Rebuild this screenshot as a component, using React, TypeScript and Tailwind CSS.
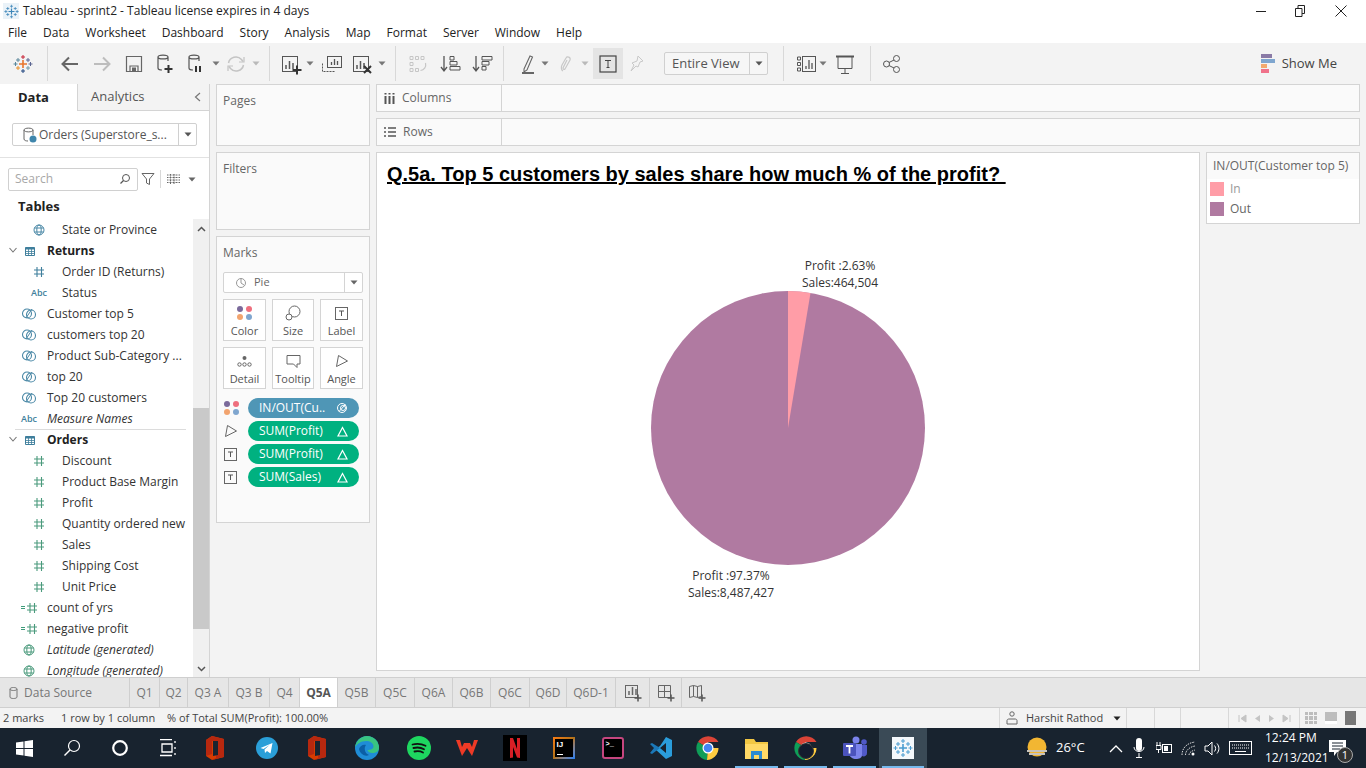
import { ReactNode } from "react";

const ink = "#555";

function Svg({ children, w = 24, h = 24, className = "" }: { children: ReactNode; w?: number; h?: number; className?: string }) {
  return (
    <svg width={w} height={h} viewBox={`0 0 ${w} ${h}`} fill="none" className={`shrink-0 ${className}`}>
      {children}
    </svg>
  );
}

function Plus({ x, y, s, color, t = 1.5 }: { x: number; y: number; s: number; color: string; t?: number }) {
  return <path d={`M${x - s} ${y}H${x + s}M${x} ${y - s}V${y + s}`} stroke={color} strokeWidth={t} />;
}

function TableauLogo({ size = 20, mono }: { size?: number; mono?: string }) {
  const c = (v: string) => mono ?? v;
  return (
    <svg width={size} height={size} viewBox="0 0 20 20" className="shrink-0">
      <Plus x={10} y={10} s={4} color={c("#e8762c")} t={1.6} />
      <Plus x={5} y={6} s={2} color={c("#5b879b")} t={1} />
      <Plus x={15} y={6} s={2} color={c("#5b6591")} t={1} />
      <Plus x={5} y={14} s={2} color={c("#eb912b")} t={1} />
      <Plus x={15} y={14} s={2} color={c("#7099a6")} t={1} />
      <Plus x={10} y={3} s={2} color={c("#c72035")} t={1} />
      <Plus x={10} y={17} s={2} color={c("#1f457e")} t={1} />
      <Plus x={2.5} y={10} s={2} color={c("#59879b")} t={1} />
      <Plus x={17.5} y={10} s={2} color={c("#5b6591")} t={1} />
    </svg>
  );
}

function Caret({ className = "", color = "#777" }: { className?: string; color?: string }) {
  return (
    <svg width="8" height="5" viewBox="0 0 8 5" className={`shrink-0 ${className}`}>
      <path d="M0.5 0.5H7.5L4 4.5Z" fill={color} />
    </svg>
  );
}

function Sep({ className = "" }: { className?: string }) {
  return <div className={`w-px h-[35px] bg-[#d8d8d8] shrink-0 ${className}`} />;
}

function Cyl({ x = 5, y = 3, color = ink }: { x?: number; y?: number; color?: string }) {
  return (
    <path
      d={`M${x} ${y + 2}c0-2.600 10-2.600 10 0v4M${x} ${y + 2}c0 2.600 10 2.600 10 0M${x} ${y + 2}v11c0 1.500 2 2 4 2`}
      stroke={color}
      strokeWidth="1.200"
    />
  );
}

function BarsBox({ x = 4, y = 4, s = 14, color = ink }: { x?: number; y?: number; s?: number; color?: string }) {
  return (
    <>
      <rect x={x + 0.5} y={y + 0.5} width={s} height={s} stroke={color} />
      <path d={`M${x + 4} ${y + s - 2}v-4M${x + 7.500} ${y + s - 2}v-8M${x + 11} ${y + s - 2}v-6`} stroke={color} strokeWidth="1.500" />
    </>
  );
}

function Toolbar() {
  return (
    <div className="h-[41px] bg-[#f3f3f3] flex items-center shrink-0">
      <div className="ml-[13px] w-[20px] flex justify-center"><TableauLogo /></div>
      <Sep className="ml-[14px]" />
      <Svg className="ml-[10px]">
        <path d="M20 12H5M11 5.500 4.500 12l6.500 6.500" stroke="#666" strokeWidth="2" />
      </Svg>
      <Svg className="ml-[8px]">
        <path d="M4 12h15M13 5.500l6.500 6.500-6.500 6.500" stroke="#bdbdbd" strokeWidth="2" />
      </Svg>
      <Svg className="ml-[8px]">
        <path d="M4.500 4.500h15v15h-15zM8 19v-5h8v5" stroke="#666" strokeWidth="1.200" />
        <rect x="10" y="15.500" width="4" height="3.500" fill="#666" />
      </Svg>
      <Svg className="ml-[7px]">
        <Cyl x={5} y={3} />
        <Plus x={15.500} y={17} s={4} color="#333" t={2} />
      </Svg>
      <Svg className="ml-[7px]">
        <Cyl x={5} y={3} />
        <path d="M12 14v6M16 14v6" stroke="#333" strokeWidth="2" />
      </Svg>
      <Caret className="ml-[4px]" />
      <Svg className="ml-[4px]">
        <path d="M4.500 11a7.500 7.500 0 0 1 13-3.500l1.500 2M19.500 13a7.500 7.500 0 0 1-13 3.500L5 14.500" stroke="#c4c4c4" strokeWidth="1.500" />
        <path d="M20 5v5h-5M4 19v-5h5" stroke="#c4c4c4" strokeWidth="1.200" />
      </Svg>
      <Caret className="ml-[4px]" color="#b9b9b9" />
      <Sep className="ml-[9px]" />
      <Svg className="ml-[9px]">
        <BarsBox x={3} y={4} s={15} />
        <Plus x={18} y={18} s={4.500} color="#333" t={2} />
      </Svg>
      <Caret className="ml-[3px]" />
      <Svg className="ml-[6px]">
        <path d="M2.500 11.500v8h13" stroke={ink} strokeDasharray="2 1" />
        <rect x="7.500" y="4.500" width="14" height="11" stroke={ink} fill="#f3f3f3" />
        <path d="M11.500 13v-3M14.500 13V7M17.500 13V9" stroke={ink} strokeWidth="1.300" />
      </Svg>
      <Svg className="ml-[6px]">
        <BarsBox x={3} y={4} s={15} />
        <path d="M14 14l7 7M21 14l-7 7" stroke="#333" strokeWidth="2" />
      </Svg>
      <Caret className="ml-[4px]" />
      <Sep className="ml-[9px]" />
      <Svg className="ml-[9px]">
        <path d="M5 4.500h3v3H5zM10.500 4.500h3v3h-3zM16 4.500h3v3h-3zM5 10.500h3v3H5zM5 16.500h3v3H5zM10.500 16.500h3v3h-3z" stroke="#c6c6c6" />
        <path d="M20.500 11c1 4-1.500 7-5 7.500" stroke="#c6c6c6" strokeWidth="1.200" />
      </Svg>
      <Svg className="ml-[9px]">
        <path d="M6 4v14M3 15l3 4 3-4" stroke={ink} strokeWidth="1.300" />
        <path d="M12 4.500h4v3.500h-4zM12 9.500h7v3.500h-7zM12 14.500h10v3.500H12z" stroke={ink} />
      </Svg>
      <Svg className="ml-[8px]">
        <path d="M6 4v14M3 15l3 4 3-4" stroke={ink} strokeWidth="1.300" />
        <path d="M12 4.500h10v3.500H12zM12 9.500h7v3.500h-7zM12 14.500h4v3.500h-4z" stroke={ink} />
      </Svg>
      <Sep className="ml-[9px]" />
      <Svg className="ml-[12px]">
        <path d="M8 17 14 4l2.500 1L11 18l-3 2z" stroke="#666" strokeWidth="1.100" />
        <rect x="6" y="20" width="12" height="2" fill="#666" />
      </Svg>
      <Caret className="ml-[1px]" />
      <Svg className="ml-[5px]">
        <path d="M9 19c-2-1-2-4-1-6l4-7c1-2 5-1 4 2l-5 9c-1 1-2 0-2-1l4-8" stroke="#c8c8c8" strokeWidth="1.200" />
      </Svg>
      <Caret className="ml-[3px]" color="#b9b9b9" />
      <div className="ml-[4px] w-[30px] h-[31px] bg-[#e4e4e4] flex items-center justify-center shrink-0">
        <Svg w={18} h={18}>
          <rect x="1" y="1" width="16" height="16" stroke="#444" strokeWidth="1.200" />
          <path d="M6 5.500h6M9 5.500v7M7.500 12.500h3" stroke="#444" />
        </Svg>
      </div>
      <Svg className="ml-[2px]">
        <path d="M13 4l5 5-3 1-2 5-2-1-5 5 3-6-2-2 5-2z" stroke="#c8c8c8" />
      </Svg>
      <div className="ml-[15px] w-[104px] h-[23px] border border-[#d0d0d0] rounded-[2px] bg-[#f6f6f6] flex items-center shrink-0">
        <span className="flex-1 pl-[7px] text-[#555] text-[13px]">Entire View</span>
        <div className="w-[18px] h-full border-l border-[#d0d0d0] flex items-center justify-center"><Caret color="#555" /></div>
      </div>
      <Sep className="ml-[15px]" />
      <Svg className="ml-[11px]">
        <path d="M2.500 5h3v3h-3zM2.500 10.500h3v3h-3zM2.500 16h3v3h-3z" stroke={ink} />
        <rect x="7.500" y="4.500" width="13" height="15" stroke={ink} />
        <path d="M11 17v-3M14 17V8M17 17v-6" stroke={ink} strokeWidth="1.300" />
      </Svg>
      <Caret className="" />
      <Svg className="ml-[6px]">
        <path d="M3 4.500h18" stroke={ink} strokeWidth="2" />
        <path d="M5 5v11.500h14V5M12 16.500V21M8 21.500h8" stroke={ink} />
      </Svg>
      <Sep className="ml-[13px]" />
      <Svg className="ml-[9px]">
        <circle cx="6.500" cy="12" r="3" stroke={ink} />
        <circle cx="16.500" cy="6.500" r="3" stroke={ink} />
        <circle cx="16.500" cy="17.500" r="3" stroke={ink} />
        <path d="M9 10.500l5-2.500M9 13.500l5 2.500" stroke={ink} />
      </Svg>
      <div className="ml-auto pr-[29px] flex items-center gap-[7px]">
        <div className="flex flex-col gap-0 w-[14px]">
          <div className="h-[4px] w-[11px] bg-[#8a7aa6]" />
          <div className="h-[4px] w-[14px] bg-[#7fa6cf] mt-px" />
          <div className="h-[4px] w-[6px] bg-[#f2a96f] mt-px" />
          <div className="h-[4px] w-[8px] bg-[#f0728a] mt-px" />
        </div>
        <span className="text-[13px] text-[#444]">Show Me</span>
      </div>
    </div>
  );
}

function GroupIcon() {
  return (
    <Svg w={16} h={14}>
      <circle cx="6" cy="6.500" r="4.500" stroke="#4a88a6" strokeWidth="1.100" />
      <circle cx="10" cy="7.500" r="4.500" stroke="#4a88a6" strokeWidth="1.100" />
      <path d="M5 11l6-9" stroke="#4a88a6" />
    </Svg>
  );
}
function Hash({ color = "#4a9a7c" }: { color?: string }) {
  return (
    <Svg w={12} h={12}>
      <path d="M4 1v10M8.500 1v10M1 4h10M1 8h10" stroke={color} strokeWidth="1.100" />
    </Svg>
  );
}
function CalcHash() {
  return (
    <div className="flex items-center gap-px">
      <span className="w-[4px] h-[3px] border-y border-[#3f9c7a]" />
      <Hash />
    </div>
  );
}
function Globe({ color = "#4a88a6" }: { color?: string }) {
  return (
    <Svg w={12} h={12}>
      <circle cx="6" cy="6" r="5" stroke={color} />
      <ellipse cx="6" cy="6" rx="2.200" ry="5" stroke={color} />
      <path d="M1.500 4h9M1.500 8h9" stroke={color} />
    </Svg>
  );
}
function Abc() {
  return <span className="text-[9px] font-semibold text-[#3f7f9c] leading-none">Abc</span>;
}
function TableIcon() {
  return (
    <Svg w={12} h={12}>
      <path d="M1.500 2.500h9v8h-9z" stroke="#3f7f9c" />
      <path d="M1.500 2.500h9v2h-9z" fill="#3f7f9c" />
      <path d="M1.500 6.500h9M1.500 8.500h9M4.500 4v6.500M7.500 4v6.500" stroke="#3f7f9c" strokeWidth="0.800" />
    </Svg>
  );
}
function Chevron() {
  return (
    <Svg w={10} h={7}>
      <path d="M1.500 1 5 5l3.500-4" stroke="#777" strokeWidth="1.100" />
    </Svg>
  );
}

// indent: child rows sit under a table, top level rows start further left
function Field({ icon, label, child, italic }: { icon: ReactNode; label: string; child?: boolean; italic?: boolean }) {
  return (
    <div className="h-[21px] flex items-center shrink-0">
      <div className={`flex justify-center shrink-0 ${child ? "w-[62px] pl-[26px] pr-[10px]" : "w-[47px] pl-[16px] pr-[5px]"}`}>{icon}</div>
      <span className={`whitespace-nowrap text-[12px] text-[#333] ${italic ? "italic" : ""}`}>{label}</span>
    </div>
  );
}
function TableRow({ label }: { label: string }) {
  return (
    <div className="h-[21px] flex items-center shrink-0">
      <div className="w-[24px] pl-[8px]"><Chevron /></div>
      <div className="w-[23px]"><TableIcon /></div>
      <span className="text-[12px] font-bold text-[#222]">{label}</span>
    </div>
  );
}

function DataPane() {
  return (
    <div className="w-[210px] bg-white border-r border-[#d4d4d4] flex flex-col shrink-0 overflow-hidden">
      <div className="h-[27px] flex shrink-0">
        <div className="w-[77px] pl-[18px] flex items-center font-bold text-[13px] text-[#222]">Data</div>
        <div className="flex-1 bg-[#f3f3f3] border-l border-b border-[#d4d4d4] flex items-center justify-between pl-[13px] pr-[6px] text-[13px] text-[#555]">
          <span>Analytics</span>
          <Svg w={10} h={12}><path d="M7 2 2.500 6 7 10" stroke="#777" strokeWidth="1.200" /></Svg>
        </div>
      </div>
      <div className="h-[47px] border-b border-[#e2e2e2] pl-[12px] pt-[12px] shrink-0">
        <div className="w-[185px] h-[23px] border border-[#d0d0d0] rounded-[2px] flex items-center">
          <Svg w={16} h={18} className="ml-[9px]">
            <path d="M2 4c0-2.500 9-2.500 9 0v5M2 4c0 2.500 9 2.500 9 0M2 4v9c0 1.500 2 2 4 2" stroke="#666" />
            <circle cx="11" cy="13" r="3.500" fill="#3f86ac" />
          </Svg>
          <span className="flex-1 text-[12px] text-[#555] whitespace-nowrap ml-[1px]">Orders (Superstore_s...</span>
          <div className="w-[18px] h-full border-l border-[#d0d0d0] flex items-center justify-center"><Caret color="#555" /></div>
        </div>
      </div>
      <div className="h-[37px] flex items-center pl-[8px] shrink-0 pt-[5px]">
        <div className="w-[130px] h-[23px] border border-[#d0d0d0] rounded-[2px] flex items-center justify-between px-[6px]">
          <span className="text-[12px] text-[#a8a8a8]">Search</span>
          <Svg w={12} h={12}>
            <circle cx="7" cy="5" r="3.500" stroke="#555" />
            <path d="M4.500 7.500 1.500 10.500" stroke="#555" strokeWidth="1.200" />
          </Svg>
        </div>
        <Svg w={14} h={14} className="ml-[3px]">
          <path d="M1 1.500h12L8.500 7v5.500l-3-1.500V7z" stroke="#666" />
        </Svg>
        <div className="w-px h-[18px] bg-[#d8d8d8] ml-[5px]" />
        <Svg w={13} h={10} className="ml-[6px]">
          <path d="M0 1h13M0 3.500h13M0 6h13M0 8.500h13M3.500 0v10M7 0v10" stroke="#666" strokeDasharray="1 0.500" />
        </Svg>
        <Caret className="ml-[8px]" color="#666" />
      </div>
      <div className="h-[24px] pl-[18px] flex items-center font-bold text-[13px] text-[#222] shrink-0">Tables</div>
      <div className="flex-1 flex min-h-0 relative">
        <div className="flex-1 flex flex-col min-w-0 overflow-hidden">
          <Field child icon={<Globe />} label="State or Province" />
          <TableRow label="Returns" />
          <Field child icon={<Hash color="#3f7f9c" />} label="Order ID (Returns)" />
          <Field child icon={<Abc />} label="Status" />
          <Field icon={<GroupIcon />} label="Customer top 5" />
          <Field icon={<GroupIcon />} label="customers top 20" />
          <Field icon={<GroupIcon />} label="Product Sub-Category ..." />
          <Field icon={<GroupIcon />} label="top 20" />
          <Field icon={<GroupIcon />} label="Top 20 customers" />
          <Field icon={<Abc />} label="Measure Names" italic />
          <div className="h-px bg-[#dcdcdc] ml-[15px] mr-[7px] -mb-px shrink-0" />
          <TableRow label="Orders" />
          {["Discount", "Product Base Margin", "Profit", "Quantity ordered new", "Sales", "Shipping Cost", "Unit Price"].map((f) => (
            <Field key={f} child icon={<Hash />} label={f} />
          ))}
          <Field icon={<CalcHash />} label="count of yrs" />
          <Field icon={<CalcHash />} label="negative profit" />
          <Field icon={<Globe color="#4a9a7c" />} label="Latitude (generated)" italic />
          <Field icon={<Globe color="#4a9a7c" />} label="Longitude (generated)" italic />
        </div>
        <div className="w-[16px] bg-[#f0f0f0] flex flex-col shrink-0">
          <div className="h-[189px] flex justify-center pt-[7px]">
            <Svg w={9} h={6}><path d="M1 5l3.500-3.500L8 5" stroke="#555" strokeWidth="1.500" /></Svg>
          </div>
          <div className="h-[221px] bg-[#c9c9c9]" />
          <div className="flex-1 flex justify-center items-end pb-[5px]">
            <Svg w={9} h={6}><path d="M1 1l3.500 3.500L8 1" stroke="#555" strokeWidth="1.500" /></Svg>
          </div>
        </div>
      </div>
    </div>
  );
}

function Dots({ className = "" }: { className?: string }) {
  return (
    <div className={`grid grid-cols-2 gap-[2px] w-[15px] ${className}`}>
      <span className="w-[6px] h-[6px] rounded-full bg-[#7b6a9b]" />
      <span className="w-[6px] h-[6px] rounded-full bg-[#ee6f7e]" />
      <span className="w-[6px] h-[6px] rounded-full bg-[#f2a46f]" />
      <span className="w-[6px] h-[6px] rounded-full bg-[#7fa6cf]" />
    </div>
  );
}
function LabelT({ s = 13 }: { s?: number }) {
  return (
    <Svg w={s} h={s}>
      <rect x="0.500" y="0.500" width={s - 1} height={s - 1} stroke="#666" />
      <path d={`M${s / 2 - 2.500} ${s / 2 - 2.500}h5M${s / 2} ${s / 2 - 2.500}v5`} stroke="#555" />
    </Svg>
  );
}
function AngleIcon() {
  return (
    <Svg w={14} h={14}>
      <path d="M3.500 1.500 12.500 7 1.500 12.500z" stroke="#666" strokeLinejoin="round" />
    </Svg>
  );
}

function MarkBtn({ icon, label, w }: { icon: ReactNode; label: string; w: string }) {
  return (
    <div className={`${w} h-[42px] border border-[#d4d4d4] bg-white flex flex-col items-center shrink-0`}>
      <div className="h-[24px] flex items-center justify-center pt-[2px]">{icon}</div>
      <span className="text-[11px] text-[#555] leading-[14px]">{label}</span>
    </div>
  );
}

function Pill({ icon, label, blue }: { icon: ReactNode; label: string; blue?: boolean }) {
  return (
    <div className="flex items-center h-[20px] mb-[3px]">
      <div className="w-[31px] pl-[7px] flex items-center shrink-0">{icon}</div>
      <div className={`w-[111px] h-[20px] rounded-full flex items-center justify-between pl-[11px] pr-[11px] text-[12px] text-white ${blue ? "bg-[#4f96b6]" : "bg-[#00b180]"}`}>
        <span className="whitespace-nowrap">{label}</span>
        {blue ? (
          <Svg w={12} h={12}>
            <circle cx="6" cy="6" r="4.500" stroke="#fff" />
            <circle cx="7" cy="6" r="2.500" stroke="#fff" />
            <path d="M3 9.500 9.500 2.500" stroke="#fff" />
          </Svg>
        ) : (
          <Svg w={11} h={11}>
            <path d="M5.500 1.500 10 10H1z" stroke="#fff" strokeWidth="1.200" />
          </Svg>
        )}
      </div>
    </div>
  );
}

function MiddleCol() {
  return (
    <div className="w-[154px] ml-[6px] flex flex-col gap-[6px] shrink-0">
      <div className="h-[62px] bg-[#fafafa] border border-[#d4d4d4] pl-[6px] pt-[7px] text-[12px] text-[#666]">Pages</div>
      <div className="h-[78px] bg-[#fafafa] border border-[#d4d4d4] pl-[6px] pt-[7px] text-[12px] text-[#666]">Filters</div>
      <div className="h-[287px] bg-[#fafafa] border border-[#d4d4d4]">
        <div className="pl-[6px] pt-[7px] text-[12px] text-[#666] h-[35px]">Marks</div>
        <div className="ml-[6px] w-[140px] h-[21px] bg-white border border-[#d4d4d4] rounded-[2px] flex items-center">
          <Svg w={12} h={12} className="ml-[11px]">
            <circle cx="6" cy="6" r="4.500" stroke="#999" />
            <path d="M6 1.500V6l3 2" stroke="#999" />
          </Svg>
          <span className="flex-1 ml-[7px] text-[11px] text-[#666]">Pie</span>
          <div className="w-[18px] h-full border-l border-[#d4d4d4] flex items-center justify-center"><Caret color="#666" /></div>
        </div>
        <div className="ml-[6px] mt-[6px] flex gap-[6px]">
          <MarkBtn w="w-[43px]" label="Color" icon={<Dots />} />
          <MarkBtn w="w-[42px]" label="Size" icon={
            <Svg w={16} h={16}>
              <circle cx="9.500" cy="6.500" r="5.500" stroke="#666" />
              <circle cx="4" cy="12" r="3" stroke="#666" fill="#fff" />
            </Svg>} />
          <MarkBtn w="w-[43px]" label="Label" icon={<LabelT />} />
        </div>
        <div className="ml-[6px] mt-[6px] flex gap-[6px]">
          <MarkBtn w="w-[43px]" label="Detail" icon={
            <Svg w={15} h={11}>
              <circle cx="7.500" cy="2" r="2" fill="#666" />
              <circle cx="2.500" cy="8.500" r="1.700" stroke="#666" />
              <circle cx="7.500" cy="8.500" r="1.700" stroke="#666" />
              <circle cx="12.500" cy="8.500" r="1.700" stroke="#666" />
            </Svg>} />
          <MarkBtn w="w-[42px]" label="Tooltip" icon={
            <Svg w={15} h={15}>
              <path d="M1 1.500h13v8.500h-3v3.500l-3.500-3.500H1z" stroke="#666" />
            </Svg>} />
          <MarkBtn w="w-[43px]" label="Angle" icon={<AngleIcon />} />
        </div>
        <div className="mt-[9px]">
          <Pill blue label="IN/OUT(Cu.." icon={<Dots />} />
          <Pill label="SUM(Profit)" icon={<AngleIcon />} />
          <Pill label="SUM(Profit)" icon={<LabelT />} />
          <Pill label="SUM(Sales)" icon={<LabelT />} />
        </div>
      </div>
    </div>
  );
}

function Shelf({ icon, label }: { icon: ReactNode; label: string }) {
  return (
    <div className="h-[28px] bg-[#fafafa] border border-[#d4d4d4] flex shrink-0">
      <div className="w-[125px] border-r border-[#d4d4d4] flex items-center pl-[7px] gap-[7px] text-[12px] text-[#666]">
        {icon}
        <span>{label}</span>
      </div>
    </div>
  );
}

function Worksheet() {
  return (
    <div className="relative flex-1 bg-white border border-[#d4d4d4] font-['Open_Sans',sans-serif]">
      <h1 className="absolute left-[10px] top-[8px] whitespace-pre font-['Liberation_Sans',Arial,sans-serif] font-bold text-[20px] leading-[26px] underline text-black">
        {"Q.5a. Top 5 customers by sales share how much % of the profit? "}
      </h1>
      <svg width="274" height="274" viewBox="0 0 274 274" className="absolute left-[274px] top-[138px]">
        <circle cx="137" cy="137" r="137" fill="#b07aa1" />
        <path d="M137 137V0A137 137 0 0 1 159.500 1.900Z" fill="#ff9da7" />
      </svg>
      <div className="absolute left-[422px] top-[104px] w-[82px] text-center text-[12px] leading-[17px] text-[#333]">
        Profit :2.63%
        <br />
        Sales:464,504
      </div>
      <div className="absolute left-[308px] top-[414px] w-[92px] text-center text-[12px] leading-[17px] text-[#333]">
        Profit :97.37%
        <br />
        Sales:8,487,427
      </div>
    </div>
  );
}

function Legend() {
  return (
    <div className="w-[154px] h-[72px] ml-[6px] border border-[#d4d4d4] bg-white shrink-0">
      <div className="h-[26px] bg-[#fafafa] flex items-center pl-[6px] text-[12px] text-[#666] whitespace-nowrap">IN/OUT(Customer top 5)</div>
      <div className="h-[20px] flex items-center pl-[3px] text-[12px] text-[#999]">
        <span className="w-[14px] h-[14px] bg-[#ff9da7] mr-[5px] ml-0" />
        <span className="ml-[1px]">In</span>
      </div>
      <div className="h-[20px] flex items-center pl-[3px] text-[12px] text-[#666]">
        <span className="w-[14px] h-[14px] bg-[#b07aa1] mr-[5px]" />
        <span className="ml-[1px]">Out</span>
      </div>
    </div>
  );
}

const tabs: [string, string][] = [
  ["Q1", "w-[30px]"], ["Q2", "w-[28px]"], ["Q3 A", "w-[41px]"], ["Q3 B", "w-[41px]"], ["Q4", "w-[30px]"],
  ["Q5A", "w-[38px]"], ["Q5B", "w-[38px]"], ["Q5C", "w-[39px]"], ["Q6A", "w-[38px]"], ["Q6B", "w-[38px]"],
  ["Q6C", "w-[39px]"], ["Q6D", "w-[37px]"], ["Q6D-1", "w-[49px]"],
];

function TabBar() {
  return (
    <div className="h-[31px] bg-[#e6e6e6] border-y border-[#cfcfcf] flex shrink-0">
      <div className="w-[130px] flex items-center pl-[9px] gap-[6px] border-r border-[#cfcfcf] text-[12px] text-[#777]">
        <Svg w={9} h={13}><path d="M1 3c0-2 7-2 7 0v8c0 2-7 2-7 0zM1 3c0 2 7 2 7 0" stroke="#777" /></Svg>
        <span>Data Source</span>
      </div>
      {tabs.map(([t, w]) => (
        <div key={t} className={`${w} flex items-center justify-center border-r border-[#cfcfcf] text-[12px] ${t === "Q5A" ? "bg-white font-bold text-[#555]" : "text-[#777]"}`}>
          {t}
        </div>
      ))}
      <div className="w-[34px] flex items-center justify-center border-r border-[#cfcfcf]">
        <Svg w={18} h={18}>
          <BarsBox x={1} y={1} s={12} color="#666" />
          <Plus x={14} y={14} s={3.500} color="#555" />
        </Svg>
      </div>
      <div className="w-[32px] flex items-center justify-center border-r border-[#cfcfcf]">
        <Svg w={18} h={18}>
          <path d="M1.500 1.500h12v12h-12zM7.500 1.500v12M1.500 7.500h12" stroke="#666" />
          <Plus x={14} y={14} s={3.500} color="#555" />
        </Svg>
      </div>
      <div className="w-[30px] flex items-center justify-center">
        <Svg w={18} h={18}>
          <path d="M1.500 2.500l4-1 4 1 4-1v11l-4 1-4-1-4 1zM5.500 1.500v11M9.500 2.500v11" stroke="#666" />
          <Plus x={14} y={14} s={3.500} color="#555" />
        </Svg>
      </div>
    </div>
  );
}

function StatusBar() {
  return (
    <div className="h-[20px] bg-[#f3f3f3] flex items-center text-[11px] text-[#444] shrink-0">
      <span className="ml-[3px] w-[58px]">2 marks</span>
      <span className="w-[106px]">1 row by 1 column</span>
      <span>% of Total SUM(Profit): 100.00%</span>
      <div className="ml-auto flex h-full">
        <div className="w-[127px] border-l border-[#d8d8d8] flex items-center pl-[6px] gap-[8px]">
          <Svg w={12} h={14}>
            <circle cx="6" cy="3" r="2.200" stroke="#666" />
            <path d="M1 13V9.500c0-1 1-1.500 2-1.500h6c1 0 2 .5 2 1.500V13z" stroke="#666" />
          </Svg>
          <span className="text-[#444]">Harshit Rathod</span>
          <Caret color="#222" className="ml-[2px]" />
        </div>
        <div className="w-[28px] border-l border-[#d8d8d8]" />
        <div className="w-[26px] border-l border-[#d8d8d8]" />
        <div className="w-[48px] border-l border-[#d8d8d8]" />
        <div className="w-[71px] border-l border-[#d8d8d8] flex items-center justify-center gap-[7px]">
          <Svg w={9} h={9}><path d="M1 1v7M8 1 3 4.500 8 8z" fill="#c4c4c4" stroke="#c4c4c4" /></Svg>
          <Svg w={7} h={9}><path d="M6 1 1 4.500 6 8z" fill="#c4c4c4" /></Svg>
          <Svg w={7} h={9}><path d="M1 1l5 3.500L1 8z" fill="#c4c4c4" /></Svg>
          <Svg w={9} h={9}><path d="M8 1v7M1 1l5 3.500L1 8z" fill="#c4c4c4" stroke="#c4c4c4" /></Svg>
        </div>
        <div className="w-[67px] border-l border-[#d8d8d8] flex items-center pl-[5px] gap-[8px]">
          <div className="w-[12px] h-[12px] grid grid-cols-3 gap-px">
            {[1, 2, 3, 4, 5, 6, 7, 8, 9].map((i) => <span key={i} className="bg-[#bdbdbd]" />)}
          </div>
          <div className="w-[12px] h-[12px] bg-[#bdbdbd] border-b-[3px] border-white" />
          <div className="w-[11px] h-[14px] bg-[#777]" />
        </div>
      </div>
    </div>
  );
}

function TaskIcon({ children, w, active, bar }: { children?: ReactNode; w: string; active?: boolean; bar?: boolean }) {
  return (
    <div className={`${w} relative flex items-center justify-center shrink-0 h-full ${active ? "bg-[#3a4a56]" : ""}`}>
      {children}
      {bar && <span className="absolute bottom-0 left-[3px] right-[3px] h-[2px] bg-[#76b9ed]" />}
    </div>
  );
}

function Taskbar() {
  return (
    <div className="h-[40px] bg-[#18232f] flex items-center shrink-0 text-white">
      <TaskIcon w="w-[48px]">
        <Svg w={17} h={17}><path d="M0 2.500 7.500 1.500v6.500H0zM8.500 1.300 17 0v8H8.500zM0 9h7.500v6.500L0 14.500zM8.500 9H17v8l-8.500-1.300z" fill="#fff" /></Svg>
      </TaskIcon>
      <TaskIcon w="w-[48px]">
        <Svg w={18} h={18}><circle cx="11" cy="7" r="5.500" stroke="#fff" strokeWidth="1.200" /><path d="M7 11 1.500 16.500" stroke="#fff" strokeWidth="1.500" /></Svg>
      </TaskIcon>
      <TaskIcon w="w-[48px]">
        <Svg w={18} h={18}><circle cx="9" cy="9" r="6.800" stroke="#fff" strokeWidth="2.200" /></Svg>
      </TaskIcon>
      <TaskIcon w="w-[47px]">
        <Svg w={18} h={18}><path d="M1 .5h12M3 5h10v8H3zM1 16.500h12M16 2v2M16 8v2M16 14v2" stroke="#fff" strokeWidth="1.300" /></Svg>
      </TaskIcon>
      <TaskIcon w="w-[48px]"><OfficeIcon /></TaskIcon>
      <TaskIcon w="w-[56px]">
        <Svg w={22} h={22}><circle cx="11" cy="11" r="11" fill="#2a9fd8" /><path d="M4.500 11 16.500 6l-2 10.500-3.500-2.500-2 2-.5-3.500 5-4.500-6 4z" fill="#fff" /></Svg>
      </TaskIcon>
      <TaskIcon w="w-[44px]"><OfficeIcon /></TaskIcon>
      <TaskIcon w="w-[56px]">
        <svg width="24" height="24" viewBox="0 0 24 24" className="shrink-0">
          <circle cx="12" cy="12" r="12" fill="#1f8dd6" />
          <path d="M12 0a12 12 0 0 1 12 12c0 3-3 5-6.500 5-3 0-5-1.500-5-3 3 0 6-1 6-3.500C18.500 7 15 5 11 5 6 5 2 8 .1 11 1 5 6 0 12 0z" fill="#39c481" />
          <path d="M4 13c1-3 4-5 7-4-2 2-2 8 3 10-4 2-9-1-10-6z" fill="#0b5fa5" />
        </svg>
      </TaskIcon>
      <TaskIcon w="w-[48px]">
        <Svg w={24} h={24}>
          <circle cx="12" cy="12" r="12" fill="#1ed760" />
          <path d="M5.500 8.500c4-1 9-.8 13 1.300M6.500 12c3.500-.8 7.500-.5 10.500 1.200M7.500 15.500c3-.6 6-.4 8.500 1" stroke="#111" strokeWidth="1.800" strokeLinecap="round" />
        </Svg>
      </TaskIcon>
      <TaskIcon w="w-[48px]">
        <Svg w={24} h={20}><path d="M1 2 7 18l5-8 5 8 6-16h-4l-2 7-2-4h-6L7 9 5 2z" fill="#ee3a26" /></Svg>
      </TaskIcon>
      <TaskIcon w="w-[48px]">
        <div className="w-[24px] h-[26px] bg-black flex items-center justify-center">
          <Svg w={10} h={20}><path d="M0 0h3l4 11V0h3v20l-3-.5L3 9v10.500L0 20z" fill="#d81f26" /></Svg>
        </div>
      </TaskIcon>
      <TaskIcon w="w-[49px]">
        <div className="w-[22px] h-[22px] bg-gradient-to-br from-[#f97a12] via-[#b07219] to-[#087cfa] p-[2px]">
          <div className="w-full h-full bg-black relative pl-[2px] pt-[1px] text-[8px] font-bold leading-[9px] font-['Liberation_Sans',sans-serif]">
            IJ
            <span className="absolute left-[2px] bottom-[2px] w-[6px] h-[1px] bg-white" />
          </div>
        </div>
      </TaskIcon>
      <TaskIcon w="w-[49px]">
        <div className="w-[22px] h-[22px] rounded-[3px] bg-black border-2 border-[#c6467f] text-[7px] leading-[10px] pl-[2px] font-bold font-['Liberation_Mono',monospace]">
          {">_"}
        </div>
      </TaskIcon>
      <TaskIcon w="w-[47px]">
        <Svg w={24} h={24}>
          <path d="M17 1 23 4v16l-6 3L6 13l5-3zM17 7l-6 5 6 5z" fill="#2a9ddb" fillRule="evenodd" />
          <path d="M1 8l2-1 8 5-8 6-2-1 4-5z" fill="#1b78b8" />
        </Svg>
      </TaskIcon>
      <TaskIcon w="w-[48px]" ><ChromeIcon /></TaskIcon>
      <TaskIcon w="w-[49px]" bar>
        <Svg w={23} h={21}>
          <path d="M0 1h9l2 3h12v17H0z" fill="#f2c743" />
          <path d="M0 6h23v15H0z" fill="#ffd966" />
          <path d="M6 13h11v8h-3v-4H9v4H6z" fill="#2d8bd2" />
        </Svg>
      </TaskIcon>
      <TaskIcon w="w-[49px]" bar>
        <ChromeIcon />
        <span className="absolute left-[17px] top-[15px] w-[16px] h-[16px] rounded-full bg-[#141c2e] border border-[#333]" />
      </TaskIcon>
      <TaskIcon w="w-[49px]" bar>
        <Svg w={26} h={24}>
          <circle cx="14" cy="4" r="3.500" fill="#7b83eb" />
          <circle cx="22" cy="6" r="2.800" fill="#5059c9" />
          <path d="M17 9h8v8c0 3-3 4-5 3z" fill="#5059c9" />
          <path d="M7 8h13v11c0 3-3 4-6 4s-7-2-7-6z" fill="#7b83eb" />
          <rect x="1" y="7" width="13" height="13" rx="1" fill="#4b53bc" />
          <path d="M4 10h7M7.500 10v7.500" stroke="#fff" strokeWidth="1.800" />
        </Svg>
      </TaskIcon>
      <TaskIcon w="w-[48px]" active bar>
        <div className="w-[22px] h-[22px] bg-[#f4f8fb] flex items-center justify-center"><TableauLogo size={20} mono="#4a9cd0" /></div>
      </TaskIcon>
      <div className="flex-1" />
      <div className="flex items-center h-full text-[13px] font-['Open_Sans',sans-serif] pr-[13px]">
        <Svg w={22} h={22} className="mr-[8px]">
          <circle cx="11" cy="10" r="9.500" fill="#f2b632" />
          <path d="M1 14h20M3 17h16" stroke="#c9c4bb" strokeWidth="2" />
        </Svg>
        <span className="w-[53px]">26°C</span>
        <Svg w={14} h={9} className="mr-[10px]"><path d="M1 8l6-6 6 6" stroke="#fff" strokeWidth="1.300" /></Svg>
        <Svg w={12} h={20} className="mr-[11px]">
          <rect x="3" y="0" width="6" height="13" rx="3" fill="#fff" />
          <path d="M1 9c0 6 10 6 10 0M6 15v4M3 19.500h6" stroke="#fff" />
        </Svg>
        <Svg w={16} h={14} className="mr-[9px]">
          <path d="M1 1v3M4 1v3M0 4.500h5v4H0zM2.500 9v3" stroke="#fff" />
          <rect x="6.500" y="3.500" width="9" height="8" stroke="#fff" />
          <rect x="8" y="5" width="4" height="5" fill="#fff" />
        </Svg>
        <Svg w={16} h={15} className="mr-[7px]">
          <path d="M1 14C1 7 6 2 14 1M4.500 14c0-4 3.500-8 9.500-9M8 14c0-2 2-4 6-5" stroke="#ddd" strokeDasharray="1.500 1" />
          <circle cx="12" cy="13" r="1.500" fill="#fff" />
        </Svg>
        <Svg w={16} h={15} className="mr-[9px]">
          <path d="M1 5h3l4-4v13l-4-4H1zM10.500 4.500c1.500 2 1.500 4 0 6M13 2.500c2.500 3 2.500 7 0 10" stroke="#fff" />
        </Svg>
        <Svg w={23} h={14} className="mr-[13px]">
          <rect x="0.500" y="0.500" width="22" height="13" stroke="#fff" />
          <path d="M3 4h17M3 7h17" stroke="#fff" strokeDasharray="1 1" />
          <path d="M6 10.500h11" stroke="#fff" />
        </Svg>
        <div className="w-[48px] text-[12px] leading-[20px] text-center whitespace-nowrap">
          <div>12:24 PM</div>
          <div>12/13/2021</div>
        </div>
        <div className="relative w-[24px] ml-[16px]">
          <Svg w={17} h={16}>
            <path d="M0 0h17v12H8l-3 4v-4H0z" fill="#fff" />
            <path d="M3 3h11M3 6h11M3 9h8" stroke="#18232f" />
          </Svg>
          <span className="absolute left-[8px] top-[7px] w-[16px] h-[16px] rounded-full bg-[#333] border border-[#aaa] text-[11px] leading-[14px] text-center">1</span>
        </div>
      </div>
    </div>
  );
}

function OfficeIcon() {
  return (
    <Svg w={20} h={26}>
      <path d="M7 1 19 4v18L7 25 1 21V5z" fill="#d83b01" />
      <path d="M7 1 1 5v16l6-2V6l4 0v17l-4 2 12-3V4z" fill="#b7280f" />
      <path d="M8 6h5v14l-5 1z" fill="#1a2430" />
    </Svg>
  );
}

function ChromeIcon() {
  return (
    <svg width="24" height="24" viewBox="0 0 24 24" className="shrink-0">
      <path d="M12 12 2 6a12 12 0 0 1 20.500 0H12z" fill="#db4437" />
      <path d="M12 12 2 6a12 12 0 0 0 9 18z" fill="#0f9d58" />
      <path d="M12 12h10.500A12 12 0 0 1 11 24z" fill="#ffcd40" />
      <circle cx="12" cy="12" r="5.500" fill="#fff" />
      <circle cx="12" cy="12" r="4.300" fill="#4285f4" />
    </svg>
  );
}

export default function App() {
  const menu = ["File", "Data", "Worksheet", "Dashboard", "Story", "Analysis", "Map", "Format", "Server", "Window", "Help"];
  return (
    <div className="w-[1366px] h-[768px] overflow-hidden flex flex-col bg-[#f3f3f3] font-['Open_Sans',sans-serif] text-[12px]">
      <div className="h-[22px] bg-white flex items-center shrink-0 pl-[3px]">
        <div className="w-[16px] h-[16px] mr-[4px] bg-[#eaf2f8] flex items-center justify-center">
          <TableauLogo size={15} mono="#3d86b8" />
        </div>
        <span className="text-[12px] text-[#222]">Tableau - sprint2 - Tableau license expires in 4 days</span>
        <div className="ml-auto flex items-center">
          <Svg w={12} h={12} className="mr-[27px]"><path d="M1 6.500h10" stroke="#222" /></Svg>
          <Svg w={12} h={12} className="mr-[29px]"><path d="M1.500 3.500h6.500v8H1.500zM4 3.500V.5h6.500v8H8" stroke="#222" /></Svg>
          <Svg w={12} h={12} className="mr-[19px]"><path d="M.5.5l11 11M11.500.5l-11 11" stroke="#222" /></Svg>
        </div>
      </div>
      <div className="h-[21px] bg-white flex items-center shrink-0 pl-[8px] gap-[16px] text-[12px] text-[#222]">
        {menu.map((m) => <span key={m}>{m}</span>)}
      </div>
      <Toolbar />
      <div className="flex-1 flex min-h-0">
        <DataPane />
        <MiddleCol />
        <div className="flex-1 ml-[6px] mr-[6px] flex flex-col gap-[6px] pb-[6px] min-w-0">
          <Shelf
            label="Columns"
            icon={<Svg w={11} h={11}><path d="M1.500 3v8M5.500 3v8M9.500 3v8M1.500 0v1.500M5.500 0v1.500M9.500 0v1.500" stroke="#555" strokeWidth="2" /></Svg>}
          />
          <Shelf
            label="Rows"
            icon={<Svg w={12} h={10}><path d="M0 1h2M4 1h8M0 5h2M4 5h8M0 9h2M4 9h8" stroke="#555" strokeWidth="1.500" /></Svg>}
          />
          <div className="flex-1 flex items-stretch min-h-0">
            <Worksheet />
            <Legend />
          </div>
        </div>
      </div>
      <TabBar />
      <StatusBar />
      <Taskbar />
    </div>
  );
}
